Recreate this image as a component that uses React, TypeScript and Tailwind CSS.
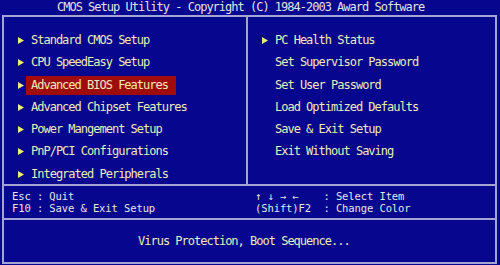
import React from "react";

const font = { fontFamily: '"DejaVu Sans Mono", "Liberation Mono", monospace' };

const Arrow = ({ show }: { show: boolean }) => (
  <svg width="6" height="7" viewBox="0 0 6 7" className="shrink-0" style={{ visibility: show ? "visible" : "hidden" }}>
    <polygon points="0,0 6,3.5 0,7" fill="#ecec7c" />
  </svg>
);

const Item = ({ label, arrow, active }: { label: string; arrow: boolean; active?: boolean }) => (
  <div className="flex items-center h-[19px] pl-[14px]">
    <Arrow show={arrow} />
    <div
      className={
        "ml-[2px] h-[19px] flex items-center pl-[5px] " +
        (active ? "bg-[#a00c0c] w-[150px]" : "")
      }
    >
      <span className="whitespace-pre text-[#ececb4]">{label}</span>
    </div>
  </div>
);

const left = [
  "Standard CMOS Setup",
  "CPU SpeedEasy Setup",
  "Advanced BIOS Features",
  "Advanced Chipset Features",
  "Power Mangement Setup",
  "PnP/PCI Configurations",
  "Integrated Peripherals",
];

const right: [string, boolean][] = [
  ["PC Health Status", true],
  ["Set Supervisor Password", false],
  ["Set User Password", false],
  ["Load Optimized Defaults", false],
  ["Save & Exit Setup", false],
  ["Exit Without Saving", false],
];

export default function App() {
  return (
    <div
      className="w-[500px] h-[265px] bg-[#06068e] overflow-hidden text-[12px] tracking-[-1px] leading-[11px]"
      style={font}
    >
      <div className="h-[15px] pl-[57px] flex items-center text-[#e2e2e2] whitespace-pre">
        CMOS Setup Utility - Copyright (C) 1984-2003 Award Software
      </div>
      <div className="ml-[2px] mr-[3px] h-[249px] border-2 border-[#a4a4d2] flex flex-col">
        <div className="h-[167px] flex">
          <div className="w-[242px] pt-[14px] flex flex-col gap-[3.3px]">
            {left.map((l, i) => (
              <Item key={l} label={l} arrow active={i === 2} />
            ))}
          </div>
          <div className="w-[2px] bg-[#a4a4d2]" />
          <div className="flex-1 pt-[14px] flex flex-col gap-[3.3px]">
            {right.map(([l, a]) => (
              <Item key={l} label={l} arrow={a} />
            ))}
          </div>
        </div>
        <div className="h-[2px] bg-[#a4a4d2]" />
        <div className="h-[32px] flex pt-[5px] text-[#e6e6e6] text-[10.5px] tracking-[-0.1px] leading-[11.5px]">
          <div className="w-[244px] pl-[8px] whitespace-pre">
            <div>Esc : Quit</div>
            <div>F10 : Save &amp; Exit Setup</div>
          </div>
          <div className="flex-1 pl-[7px] whitespace-pre">
            <div>{"↑ ↓ → ←    : Select Item"}</div>
            <div>{"(Shift)F2  : Change Color"}</div>
          </div>
        </div>
        <div className="h-[2px] bg-[#a4a4d2]" />
        <div className="flex-1 flex items-center pl-[134px] text-[#ececb4] whitespace-pre">
          Virus Protection, Boot Sequence...
        </div>
      </div>
    </div>
  );
}
